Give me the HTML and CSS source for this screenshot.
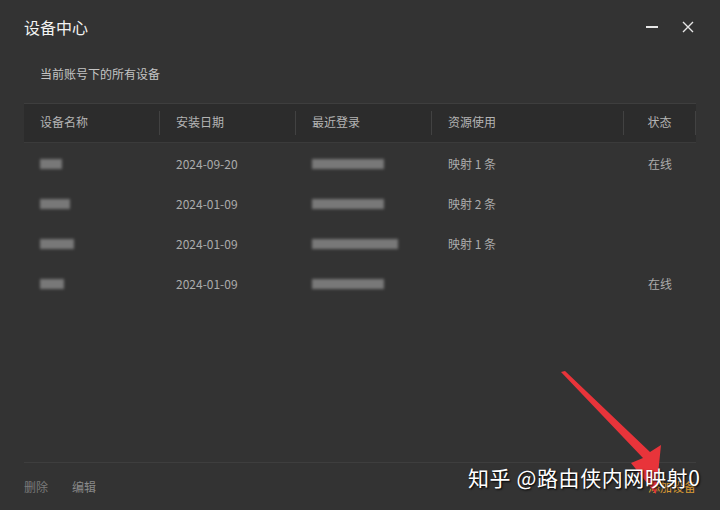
FILE: index.html
```html
<!DOCTYPE html>
<html lang="zh-CN">

<head>
    <meta charset="UTF-8">
    <title>设备中心</title>
    <link rel="stylesheet" href="styles.css">
</head>

<body>

    <div class="window">
        <div class="titlebar">
            <span class="title">设备中心</span>
            <div class="controls">
                <span class="btn-min"></span>
                <svg class="btn-close" width="12" height="12" viewBox="0 0 12 12">
                    <path d="M1 1 L11 11 M11 1 L1 11" stroke="#e6e6e6" stroke-width="1.4" />
                </svg>
            </div>
        </div>

        <p class="subtitle">当前账号下的所有设备</p>

        <div class="table">
            <div class="row head">
                <div class="cell">设备名称</div>
                <div class="cell">安装日期</div>
                <div class="cell">最近登录</div>
                <div class="cell">资源使用</div>
                <div class="cell center">状态</div>
            </div>
            <div class="row">
                <div class="cell"><span class="blur w22"></span></div>
                <div class="cell">2024-09-20</div>
                <div class="cell"><span class="blur w72"></span></div>
                <div class="cell">映射 1 条</div>
                <div class="cell center">在线</div>
            </div>
            <div class="row">
                <div class="cell"><span class="blur w30"></span></div>
                <div class="cell">2024-01-09</div>
                <div class="cell"><span class="blur w72"></span></div>
                <div class="cell">映射 2 条</div>
                <div class="cell center"></div>
            </div>
            <div class="row">
                <div class="cell"><span class="blur w34"></span></div>
                <div class="cell">2024-01-09</div>
                <div class="cell"><span class="blur w86"></span></div>
                <div class="cell">映射 1 条</div>
                <div class="cell center"></div>
            </div>
            <div class="row">
                <div class="cell"><span class="blur w24"></span></div>
                <div class="cell">2024-01-09</div>
                <div class="cell"><span class="blur w72"></span></div>
                <div class="cell"></div>
                <div class="cell center">在线</div>
            </div>
        </div>

        <div class="spacer"></div>

        <div class="footer">
            <div class="actions">
                <a class="del">删除</a>
                <a class="edit">编辑</a>
            </div>
            <a class="add">添加设备</a>
        </div>
    </div>

    <!-- screenshot annotation -->
    <svg class="arrow" width="720" height="510" viewBox="0 0 720 510">
        <path d="M561 372 L565 371 L650 452 L661 445 L656 494 L631 463 L643 458 Z" fill="#e8343a" />
    </svg>
    <div class="watermark">知乎 @路由侠内网映射0</div>

</body>

</html>
```

FILE: styles.css
```css
* {
    box-sizing: border-box;
    font-family: 'Noto Sans CJK SC', 'Noto Sans', sans-serif;
}

body {
    margin: 0;
    background: #333333;
    width: 720px;
    height: 510px;
    overflow: hidden;
    position: relative;
}

.window {
    height: 510px;
    display: flex;
    flex-direction: column;
}

.titlebar {
    height: 54px;
    padding: 0 26px 0 24px;
    display: flex;
    align-items: center;
    justify-content: space-between;
}

.title {
    color: #f2f2f2;
    font-size: 16px;
}

.controls {
    display: flex;
    align-items: center;
    gap: 24px;
}

.btn-min {
    width: 12px;
    height: 1.5px;
    background: #e6e6e6;
}

.subtitle {
    margin: 0;
    padding-left: 40px;
    height: 40px;
    line-height: 40px;
    color: #c4c4c4;
    font-size: 12px;
}

.spacer {
    flex: 1;
}

.table {
    margin: 9px 24px 0;
    border-top: 1px solid #3e3e3e;
}

.row {
    display: grid;
    grid-template-columns: 136px 136px 136px 192px 72px;
    height: 40px;
    align-items: center;
    color: #ababab;
    font-size: 12px;
}

.row.head {
    height: 39px;
    background: #2c2c2c;
    border-bottom: 1px solid #3b3b3b;
    color: #b4b4b4;
}

.cell {
    padding-left: 16px;
    display: flex;
    align-items: center;
}

.cell.center {
    padding-left: 0;
    justify-content: center;
}

.head .cell {
    height: 24px;
    padding-bottom: 3px;
    border-right: 1px solid #424242;
}

.blur {
    display: inline-block;
    height: 10px;
    margin-top: 2px;
    background: #8a8a8a;
    filter: blur(1.5px);
    opacity: 0.8;
}

.w22 { width: 22px; }
.w24 { width: 24px; }
.w30 { width: 30px; }
.w34 { width: 34px; }
.w72 { width: 72px; }
.w86 { width: 86px; }

.footer {
    margin: 0 24px;
    height: 48px;
    border-top: 1px solid #3e3e3e;
    display: flex;
    align-items: center;
    justify-content: space-between;
    font-size: 12px;
}

.actions {
    display: flex;
    gap: 24px;
}

.del {
    color: #7a7a7a;
}

.edit {
    color: #8a8a8a;
}

.add {
    color: #d99a34;
}

.arrow {
    position: absolute;
    left: 0;
    top: 0;
}

.watermark {
    position: absolute;
    left: 468px;
    top: 464px;
    color: #ffffff;
    font-size: 21px;
    letter-spacing: 0.6px;
    line-height: 26px;
    white-space: nowrap;
    text-shadow: 1px 1px 2px #000;
}
```
